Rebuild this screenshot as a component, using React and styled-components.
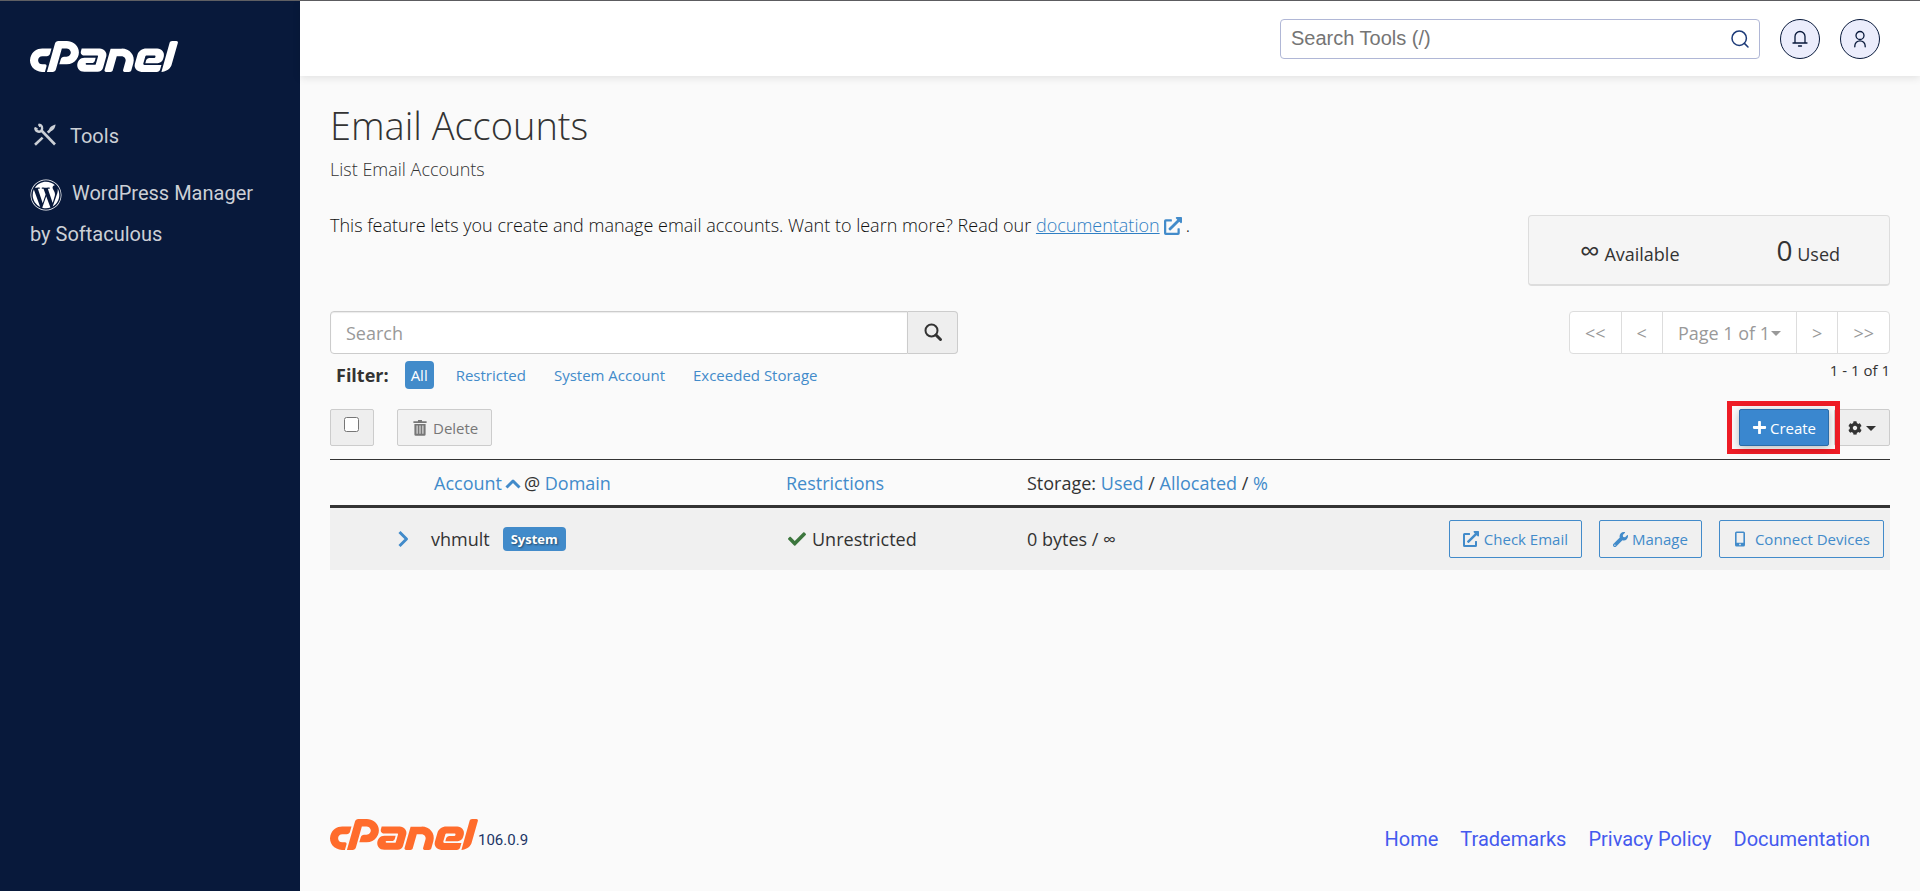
import React from 'react';
import styled, { createGlobalStyle, css } from 'styled-components';
import {
  FaCpanel,
  FaWordpress,
  FaExternalLinkAlt,
  FaPlus,
  FaCog,
  FaWrench,
  FaCheck,
} from 'react-icons/fa';

const GlobalStyle = createGlobalStyle`
  *, *::before, *::after { box-sizing: border-box; }
  body {
    margin: 0;
    background: #fafafa;
    color: #333;
    font: 400 18px/26px "Open Sans", "Noto Sans", sans-serif;
  }
  button, input { font-family: inherit; font-weight: inherit; }
  svg { display: block; flex: none; }
`;

const blue = '#428bca';

const Page = styled.div`
  display: flex;
  min-height: 100vh;
  border-top: 1px solid #5f5f63;
`;

/* Sidebar */
const Sidebar = styled.aside`
  flex: none;
  width: 300px;
  padding: 40px 30px;
  background: #08193b;
  font-family: Roboto, sans-serif;
`;

const LogoLink = styled.a`
  display: block;
  width: 148px;
  color: ${(p) => p.$color};
`;

const Wordmark = styled(FaCpanel)`
  width: 148px;
  height: 32px;
  overflow: visible;
`;

const SideNav = styled.nav`
  display: flex;
  flex-direction: column;
  gap: 16px;
  margin-top: 43px;
`;

const SideLink = styled.a`
  color: #ccd0d6;
  font-size: 20px;
  line-height: 41px;
  text-decoration: none;
`;

const ToolsSvg = styled.svg`
  display: inline-block;
  margin-right: 12px;
  vertical-align: -4px;
`;

const WordpressIcon = styled(FaWordpress)`
  display: inline-block;
  width: 32px;
  height: 32px;
  margin-right: 10px;
  vertical-align: middle;
  color: #fff;
`;

/* Main column */
const Main = styled.div`
  flex: 1;
  min-width: 0;
  display: flex;
  flex-direction: column;
`;

const TopBar = styled.header`
  display: flex;
  justify-content: flex-end;
  align-items: center;
  gap: 20px;
  height: 75px;
  padding: 0 40px;
  background: #fff;
  box-shadow: 0 2px 8px rgba(0, 0, 0, 0.1);
`;

const ToolSearch = styled.form`
  display: flex;
  align-items: center;
  width: 480px;
  height: 40px;
  padding: 0 9px 0 10px;
  border: 1px solid #b0b7d6;
  border-radius: 4px;

  input {
    flex: 1;
    min-width: 0;
    border: 0;
    padding: 0;
    outline: 0;
    background: transparent;
    font: 20px "Liberation Sans", Arial, sans-serif;
  }
  input::placeholder { color: #757575; opacity: 1; }
`;

const PlainButton = styled.button`
  display: inline-flex;
  padding: 0;
  border: 0;
  background: none;
  color: ${(p) => p.$color || blue};
`;

const RoundButton = styled.button`
  display: flex;
  align-items: center;
  justify-content: center;
  width: 40px;
  height: 40px;
  padding: 0;
  border: 1px solid #08193b;
  border-radius: 50%;
  background: #ebedfc;
  color: #08193b;
`;

const Content = styled.main`
  flex: 1;
  padding: 20px 30px 0;
`;

const Title = styled.h1`
  margin: 0;
  font-size: 38px;
  line-height: 58px;
  font-weight: 300;
`;

const Subtitle = styled.p`
  margin: 2px 0 0;
  font-weight: 300;
`;

const IntroRow = styled.div`
  display: flex;
  justify-content: space-between;
  align-items: flex-start;
  margin-top: 30px;
`;

const Intro = styled.p`
  margin: 0;
  color: #111;
  font-weight: 300;
`;

const DocLink = styled.a`
  color: #2f7fc4;
`;

const InlineExternal = styled(FaExternalLinkAlt)`
  display: inline-block;
  width: 18px;
  height: 18px;
  margin: 0 4px;
  vertical-align: -3px;
  color: ${blue};
`;

const Stats = styled.div`
  display: flex;
  justify-content: space-between;
  align-items: center;
  width: 362px;
  height: 71px;
  margin-top: 3px;
  padding: 4px 49px 0 51px;
  border: 1px solid #ddd;
  border-bottom-width: 2px;
  border-radius: 4px;
  background: #f5f5f5;

  strong {
    font-size: 28px;
    font-weight: inherit;
  }
`;

const ControlsRow = styled.div`
  display: flex;
  justify-content: space-between;
  align-items: flex-start;
  margin-top: 25px;
`;

const ListSearch = styled.form`
  display: flex;
  width: 628px;
  height: 43px;

  input {
    flex: 1;
    min-width: 0;
    padding: 0 15px;
    border: 1px solid #ccc;
    border-radius: 4px 0 0 4px;
    background: #fff;
    box-shadow: inset 0 1px 1px rgba(0, 0, 0, 0.08);
    font-size: 18px;
  }
  input::placeholder { color: #999; opacity: 1; }

  button {
    display: flex;
    align-items: center;
    justify-content: center;
    width: 50px;
    padding: 0;
    border: 1px solid #ccc;
    border-left: 0;
    border-radius: 0 4px 4px 0;
    background: #eee;
    color: #333;
  }
`;

const Filters = styled.div`
  display: flex;
  align-items: center;
  gap: 4px;
  height: 28px;
  margin-top: 7px;
  padding-left: 6px;

  strong { margin-right: 12px; }
`;

const FilterButton = styled.button`
  height: 28px;
  padding: 0 ${(p) => (p.$active ? 6 : 12)}px;
  margin-right: ${(p) => (p.$active ? 6 : 0)}px;
  border: 0;
  border-radius: 4px;
  background: ${(p) => (p.$active ? blue : 'transparent')};
  color: ${(p) => (p.$active ? '#fff' : blue)};
  font-size: 15px;
`;

const PagerColumn = styled.div`
  text-align: right;
  font-size: 15px;
`;

const Pager = styled.div`
  display: flex;
  height: 43px;
  margin-bottom: 3px;
  border: 1px solid #ddd;
  border-radius: 4px;
  background: #fff;

  button {
    display: flex;
    align-items: center;
    gap: 1px;
    padding: 0 15px;
    border: 0;
    background: none;
    color: #999;
    font-size: 18px;
  }
  button + button { border-left: 1px solid #ddd; }
`;

const ActionsRow = styled.div`
  display: flex;
  align-items: center;
  margin-top: 20px;
  height: 37px;
`;

const boxButton = css`
  display: inline-flex;
  align-items: center;
  height: 37px;
  border: 1px solid #ccc;
  border-radius: 2px;
  font-size: 15px;
`;

const CheckAll = styled.label`
  ${boxButton}
  align-items: flex-start;
  justify-content: center;
  width: 44px;
  padding: 7px 1px 0 0;
  background: #eee;

  input { width: 15px; height: 15px; margin: 0; }
`;

const DeleteButton = styled.button`
  ${boxButton}
  gap: 6px;
  margin-left: 23px;
  width: 95px;
  padding: 0 0 0 15px;
  background: #f2f2f2;
  color: #777;
`;

const Highlight = styled.div`
  flex: none;
  margin: 0 -6px 0 auto;
  padding: 3px 6px 3px 7px;
  border: 5px solid #ee1c25;
  position: relative;
`;

const CreateButton = styled.button`
  ${boxButton}
  gap: 3px;
  width: 90px;
  justify-content: center;
  padding: 0;
  border-color: #2b6ca8;
  background: #3a87cf;
  color: #fff;
  box-shadow: 0 2px 8px rgba(0, 0, 0, 0.25);
`;

const GearButton = styled.button`
  ${boxButton}
  gap: 4px;
  width: 56px;
  justify-content: flex-end;
  padding: 0 13px 0 0;
  background: #eee;
  color: #333;
`;

const AccountTable = styled.table`
  width: 100%;
  margin-top: 13px;
  border-collapse: separate;
  border-spacing: 0;
  table-layout: fixed;

  th {
    height: 49px;
    padding: 0;
    border-top: 1px solid #333;
    border-bottom: 3px solid #333;
    font-weight: inherit;
    text-align: left;
  }
  td {
    height: 62px;
    padding: 0;
    background: #f0f0f0;
  }
`;

const SortLink = styled.a`
  color: ${blue};
  text-decoration: none;
`;

const SortIcon = styled.svg`
  display: inline-block;
  width: 16px;
  height: 12px;
  margin: 0 3px;
`;

const AccountHead = styled.div`
  padding-left: 4px;
`;

const AccountCell = styled.div`
  display: flex;
  align-items: center;
  gap: 13px;
  padding-left: 1px;
`;

const Badge = styled.span`
  padding: 0 8px;
  border-radius: 4px;
  background: ${blue};
  color: #fff;
  font-size: 13px;
  line-height: 24px;
  font-weight: 700;
  text-shadow: 1px 1px 2px rgba(0, 0, 0, 0.5);
`;

const Status = styled.div`
  display: flex;
  align-items: center;
  gap: 6px;
  padding-left: 2px;

  svg { color: #3c763d; width: 18px; height: 18px; }
`;

const RowActions = styled.div`
  display: flex;
  justify-content: flex-end;
  gap: 17px;
  padding-right: 6px;
`;

const OutlineButton = styled.button`
  ${boxButton}
  height: 38px;
  gap: ${(p) => p.$gap || 5}px;
  padding: 0 13px;
  border-color: ${blue};
  background: transparent;
  color: ${blue};
  white-space: nowrap;
`;

const Footer = styled.footer`
  display: flex;
  align-items: flex-end;
  padding: 0 50px 40px 30px;
  font-family: Roboto, sans-serif;
`;

const Version = styled.span`
  color: #213566;
  font-size: 15px;
  line-height: 22px;
`;

const FooterNav = styled.nav`
  display: flex;
  gap: 22px;
  margin-left: auto;

  a {
    color: #4459ee;
    font-size: 20px;
    line-height: 24px;
    text-decoration: none;
  }
`;

const strokeProps = {
  fill: 'none',
  stroke: 'currentColor',
  strokeLinecap: 'round',
  strokeLinejoin: 'round',
};

const CpanelLogo = () => (
  <Wordmark viewBox="0 179 640 146" preserveAspectRatio="none" aria-hidden="true" />
);

const Caret = () => (
  <svg width="10" height="6" viewBox="0 0 10 6" fill="currentColor">
    <path d="M0 1 H10 L5 6 Z" />
  </svg>
);

const ToolsIcon = () => (
  <ToolsSvg width="28" height="24" viewBox="-4 0 28 24" {...strokeProps} strokeWidth="2.4" strokeLinecap="butt">
    <path d="M7 7 L21 21.5" strokeWidth="2.6" />
    <path d="M1 21.8 L8.6 14.6" strokeWidth="2.6" />
    <path d="M1.4 4.6 C1 8 4.6 9.6 7.2 8 C9.2 5.4 8 1.8 4.6 1.6" />
    <path d="M1 4.6 L3.8 6.2 M4.6 1.2 L5.8 4" strokeWidth="1.2" />
    <path d="M13.8 9.6 L17.4 6" strokeWidth="2.6" />
    <path d="M15.2 6.2 C15.6 3.8 17.8 2.6 21.2 1.4 L21.6 1.8 C20.8 5.4 19.6 7.4 17 8 Z" fill="currentColor" stroke="none" />
  </ToolsSvg>
);

const HeaderSearchIcon = () => (
  <svg width="20" height="20" viewBox="0 0 20 20" {...strokeProps} strokeWidth="1.5">
    <circle cx="9.2" cy="9.2" r="7.2" />
    <path d="M14.4 14.4 L18 18" />
  </svg>
);

const BellIcon = () => (
  <svg width="18" height="18" viewBox="0 0 18 18" {...strokeProps} strokeWidth="1.3">
    <path d="M2 13 H16 M4 13 V6.5 A5 5 0 0 1 14 6.5 V13 M7.5 16 H10.5" />
  </svg>
);

const UserIcon = () => (
  <svg width="18" height="18" viewBox="0 0 18 18" {...strokeProps} strokeWidth="1.3">
    <circle cx="9" cy="5.5" r="4" />
    <path d="M3.8 16.8 V16 A5.2 5.2 0 0 1 14.2 16 V16.8" />
  </svg>
);

const MagnifierIcon = () => (
  <svg width="20" height="20" viewBox="0 0 20 20" {...strokeProps}>
    <circle cx="8.5" cy="7.5" r="6" strokeWidth="2" />
    <path d="M13 12 L17.5 16.5" strokeWidth="3" />
  </svg>
);

const TrashIcon = () => (
  <svg width="14" height="16" viewBox="0 0 14 16" fill="currentColor">
    <path d="M5 0 H9 V1.2 H13.6 V3 H0.4 V1.2 H5 Z" />
    <path fillRule="evenodd" d="M1.4 4 H12.6 V14.4 Q12.6 15.8 11.2 15.8 H2.8 Q1.4 15.8 1.4 14.4 Z M3.6 5.6 V13.8 H4.6 V5.6 Z M6.5 5.6 V13.8 H7.5 V5.6 Z M9.4 5.6 V13.8 H10.4 V5.6 Z" />
  </svg>
);

const PhoneIcon = () => (
  <svg width="14" height="16" viewBox="0 0 14 16" fill="currentColor">
    <path fillRule="evenodd" d="M3.6 0.5 H10.4 Q12 0.5 12 2 V14 Q12 15.5 10.4 15.5 H3.6 Q2 15.5 2 14 V2 Q2 0.5 3.6 0.5 Z M3.6 2 V11.8 H10.4 V2 Z M6.2 12.8 V14.2 H7.8 V12.8 Z" />
  </svg>
);

const footerLinks = ['Home', 'Trademarks', 'Privacy Policy', 'Documentation'];
const filters = ['All', 'Restricted', 'System Account', 'Exceeded Storage'];

export default function App() {
  return (
    <Page>
      <GlobalStyle />
      <Sidebar>
        <LogoLink href="#" $color="#fff" aria-label="cPanel home">
          <CpanelLogo />
        </LogoLink>
        <SideNav>
          <SideLink href="#">
            <ToolsIcon />
            Tools
          </SideLink>
          <SideLink href="#">
            <WordpressIcon />
            WordPress Manager by Softaculous
          </SideLink>
        </SideNav>
      </Sidebar>

      <Main>
        <TopBar>
          <ToolSearch role="search">
            <input type="text" placeholder="Search Tools (/)" aria-label="Search Tools" />
            <PlainButton type="button" $color="#1c3a78" aria-label="Search tools">
              <HeaderSearchIcon />
            </PlainButton>
          </ToolSearch>
          <RoundButton type="button" aria-label="Notifications">
            <BellIcon />
          </RoundButton>
          <RoundButton type="button" aria-label="User">
            <UserIcon />
          </RoundButton>
        </TopBar>

        <Content>
          <Title>Email Accounts</Title>
          <Subtitle>List Email Accounts</Subtitle>

          <IntroRow>
            <Intro>
              This feature lets you create and manage email accounts. Want to learn more? Read our{' '}
              <DocLink href="#">documentation</DocLink>
              <InlineExternal />.
            </Intro>
            <Stats>
              <span>
                <strong>∞</strong> Available
              </span>
              <span>
                <strong>0</strong> Used
              </span>
            </Stats>
          </IntroRow>

          <ControlsRow>
            <div>
              <ListSearch role="search">
                <input type="text" placeholder="Search" aria-label="Search accounts" />
                <button type="button" aria-label="Search">
                  <MagnifierIcon />
                </button>
              </ListSearch>
              <Filters>
                <strong>Filter:</strong>
                {filters.map((name, i) => (
                  <FilterButton key={name} type="button" $active={i === 0}>
                    {name}
                  </FilterButton>
                ))}
              </Filters>
            </div>
            <PagerColumn>
              <Pager>
                <button type="button">&lt;&lt;</button>
                <button type="button">&lt;</button>
                <button type="button">
                  Page 1 of 1
                  <Caret />
                </button>
                <button type="button">&gt;</button>
                <button type="button">&gt;&gt;</button>
              </Pager>
              1 - 1 of 1
            </PagerColumn>
          </ControlsRow>

          <ActionsRow>
            <CheckAll>
              <input type="checkbox" aria-label="Select all accounts" />
            </CheckAll>
            <DeleteButton type="button">
              <TrashIcon />
              Delete
            </DeleteButton>
            <Highlight>
              <CreateButton type="button">
                <FaPlus size={15} />
                Create
              </CreateButton>
            </Highlight>
            <GearButton type="button" aria-label="Settings">
              <FaCog size={14} />
              <Caret />
            </GearButton>
          </ActionsRow>

          <AccountTable>
            <colgroup>
              <col style={{ width: 100 }} />
              <col style={{ width: 356 }} />
              <col style={{ width: 241 }} />
              <col style={{ width: 300 }} />
              <col />
            </colgroup>
            <thead>
              <tr>
                <th />
                <th>
                  <AccountHead>
                    <SortLink href="#">
                      Account
                      <SortIcon viewBox="0 0 16 12" {...strokeProps} strokeWidth="3" strokeLinecap="butt">
                        <path d="M1.5 9.5 L8 3 L14.5 9.5" />
                      </SortIcon>
                    </SortLink>
                    @ <SortLink href="#">Domain</SortLink>
                  </AccountHead>
                </th>
                <th>
                  <SortLink href="#">Restrictions</SortLink>
                </th>
                <th>
                  Storage: <SortLink href="#">Used</SortLink> / <SortLink href="#">Allocated</SortLink> /{' '}
                  <SortLink href="#">%</SortLink>
                </th>
                <th />
              </tr>
            </thead>
            <tbody>
              <tr>
                <td>
                  <RowActions>
                    <PlainButton type="button" aria-label="Expand account">
                      <svg width="26" height="18" viewBox="0 0 26 18" {...strokeProps} strokeWidth="3" strokeLinecap="butt">
                        <path d="M1.5 2 L8.5 9 L1.5 16" />
                      </svg>
                    </PlainButton>
                  </RowActions>
                </td>
                <td>
                  <AccountCell>
                    vhmult <Badge>System</Badge>
                  </AccountCell>
                </td>
                <td>
                  <Status>
                    <FaCheck />
                    Unrestricted
                  </Status>
                </td>
                <td>0 bytes / ∞</td>
                <td>
                  <RowActions>
                    <OutlineButton type="button">
                      <FaExternalLinkAlt size={16} />
                      Check Email
                    </OutlineButton>
                    <OutlineButton type="button" $gap={4}>
                      <FaWrench size={15} />
                      Manage
                    </OutlineButton>
                    <OutlineButton type="button" $gap={8}>
                      <PhoneIcon />
                      Connect Devices
                    </OutlineButton>
                  </RowActions>
                </td>
              </tr>
            </tbody>
          </AccountTable>
        </Content>

        <Footer>
          <LogoLink href="#" $color="#ff6c2c" aria-label="cPanel">
            <CpanelLogo />
          </LogoLink>
          <Version>106.0.9</Version>
          <FooterNav>
            {footerLinks.map((name) => (
              <a key={name} href="#">
                {name}
              </a>
            ))}
          </FooterNav>
        </Footer>
      </Main>
    </Page>
  );
}
